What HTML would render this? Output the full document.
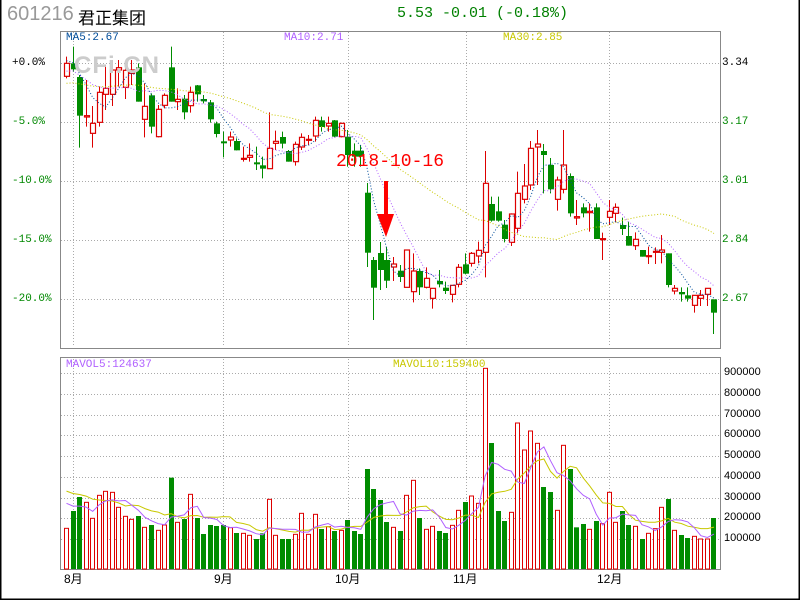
<!DOCTYPE html>
<html><head><meta charset="utf-8"><style>
html,body{margin:0;padding:0;background:#fff;}
body{width:800px;height:600px;overflow:hidden;position:relative;font-family:"Liberation Sans","Noto Sans CJK SC",sans-serif;}
.t{position:absolute;white-space:nowrap;}
.m{font-family:"Liberation Mono","DejaVu Sans Mono",monospace;}
</style></head><body>
<svg id="s" width="800" height="600" style="position:absolute;left:0;top:0"></svg>
<div class="t" style="left:7px;top:3px;font-size:20px;color:#999;">601216</div>
<div class="t" style="left:78px;top:4px;font-size:17px;color:#000;font-family:'Noto Sans CJK SC',sans-serif;">君正集团</div>
<div class="t m" style="left:397px;top:5px;font-size:15px;color:#008000;">5.53 -0.01 (-0.18%)</div>
<div class="t m" style="left:66px;top:32px;font-size:11px;color:#004c99;">MA5:2.67</div>
<div class="t m" style="left:284px;top:32px;font-size:11px;color:#b060ff;">MA10:2.71</div>
<div class="t m" style="left:503px;top:32px;font-size:11px;color:#c8c800;">MA30:2.85</div>
<div class="t m" style="left:66px;top:359px;font-size:11px;color:#b060ff;">MAVOL5:124637</div>
<div class="t m" style="left:393px;top:359px;font-size:11px;color:#c8c800;">MAVOL10:159400</div>
<div class="t" style="left:74px;top:52px;font-size:24px;font-weight:bold;color:#ccc;letter-spacing:1px;">CFi.CN</div>
<div class="t m" style="left:336px;top:152px;font-size:18px;color:#f00;">2018-10-16</div>
<div class="t m" style="left:12px;top:57px;font-size:11px;color:#000;">+0.0%</div>
<div class="t m" style="left:12px;top:116px;font-size:11px;color:#080;">-5.0%</div>
<div class="t m" style="left:12px;top:175px;font-size:11px;color:#080;">-10.0%</div>
<div class="t m" style="left:12px;top:234px;font-size:11px;color:#080;">-15.0%</div>
<div class="t m" style="left:12px;top:293px;font-size:11px;color:#080;">-20.0%</div>
<div class="t m" style="left:722px;top:57px;font-size:11px;color:#000;">3.34</div>
<div class="t m" style="left:722px;top:116px;font-size:11px;color:#080;">3.17</div>
<div class="t m" style="left:722px;top:175px;font-size:11px;color:#080;">3.01</div>
<div class="t m" style="left:722px;top:234px;font-size:11px;color:#080;">2.84</div>
<div class="t m" style="left:722px;top:293px;font-size:11px;color:#080;">2.67</div>
<div id="vl"></div>
<div class="t" style="left:64px;top:570px;font-size:12px;">8月</div>
<div class="t" style="left:214px;top:570px;font-size:12px;">9月</div>
<div class="t" style="left:335px;top:570px;font-size:12px;">10月</div>
<div class="t" style="left:453px;top:570px;font-size:12px;">11月</div>
<div class="t" style="left:597px;top:570px;font-size:12px;">12月</div>
<script>
var vl=document.getElementById('vl'),h='';
for(var k=9;k>=1;k--){var y=373.3+(9-k)*20.7;h+='<div class="t" style="left:724px;top:'+(y-7)+'px;font-size:11px;color:#000;">'+k+'00000</div>';}
vl.innerHTML=h;
// candles: [color, bodyTop, bodyBot, wickTop, wickBot] ; seg A zoom/3
var A=[['R',190,229,170,235],['G',190,208,140,215],['G',231,347,225,443],['R',347,351,240,380],['R',370,400,318,443],['R',277,367,260,380],['R',265,283,195,330],['R',210,283,180,318],['R',203,210,180,260],['R',211,262,200,297],['R',210,220,180,255],['G',202,305,190,305],['R',319,358,250,412],['G',286,380,280,400],['R',328,410,315,412],['R',286,316,280,325],['G',202,305,140,305],['R',298,305,265,330],['G',296,337,285,358],['R',277,317,260,338],['G',256,283,255,305],['G',297,304,285,310],['G',307,358,300,368],['G',370,402,365,412],['G',424,430,395,472],['R',411,420,395,440],['G',423,451,415,451],['R',475,478,440,485],['R',466,472,430,485],['G',487,493,440,510],['G',496,506,470,535],['R',445,506,337,506],['R',424,430,392,450],['G',411,431,395,445],['G',453,485,450,485],['R',433,485,425,497],['R',412,441,400,450],['R',418,420,405,435],['R',361,408,350,425],['G',361,381,350,395],['R',370,378,350,395],['G',361,410,360,412],['R',370,410,368,412],['G',410,465,390,500],['G',452,470,430,500],['G',452,470,435,500]];
var B=[['G',192.7,252.7,183,267],['G',260,287.7,257,320],['G',253,270,242,290],['G',260,280.7,247,288],['R',264,267,257,281],['G',270.7,277,265,282]];
var C=[['R',240,352,240,352],['R',303,365,250,397],['G',303,352,295,375],['R',325,352,292,355],['R',355,385,355,416],['G',333,343,300,352],['G',353,363,335,372],['R',346,373,345,397],['R',292,343,282,352],['G',283,311,250,313],['R',250,280,246,290],['R',241,258,215,280],['R',40,247,-57,322],['G',102,152,80,155],['G',124,152,80,155],['G',164,207,150,217],['R',132,217,130,228],['R',70,175,5,190],['R',48,88,-18,100],['R',-65,45,-87,60],['R',-78,-69,-120,45],['G',-57,-45,-78,70],['G',-15,58,-36,70],['R',30,88,20,122],['R',-15,58,-120,70],['G',18,130,10,140],['R',140,144,90,165],['G',112,130,100,142],['R',124,128,100,185],['G',112,207,100,207],['R',206,208,188,270],['R',124,142,90,165],['R',112,130,100,157],['G',165,177,143,195],['G',198,227,155,227],['R',208,227,187,240],['G',240,260,240,260],['R',257,259,230,282],['R',244,246,232,282],['R',240,247,195,280],['G',250,345,250,352],['R',355,363,345,373],['G',366,373,352,395],['G',376,386,352,395],['R',376,406,375,428],['R',376,385,360,408],['R',355,373,355,408],['G',388,428,388,492]];
var c=[];
A.forEach(function(a){c.push([a[0],a[1]/3,a[2]/3,a[3]/3,a[4]/3]);});
B.forEach(function(a){c.push(a);});
C.forEach(function(a){c.push([a[0],170+a[1]/3,170+a[2]/3,170+a[3]/3,170+a[4]/3]);});
var V=[['R',535],['G',483],['G',441],['R',457],['R',505],['R',436],['R',424],['R',427],['R',472],['R',499],['R',508],['G',498],['R',532],['G',525],['R',541],['R',525],['G',383],['R',517],['G',507],['R',433],['G',504],['G',552],['G',525],['G',528],['G',525],['R',533],['G',549],['R',550],['R',556],['G',567],['G',550],['R',448],['R',556],['G',567],['G',567],['R',553],['R',490],['R',553],['R',493],['G',537],['R',530],['G',543],['R',541],['G',510],['G',543],['G',552],['G',357],['G',417],['G',450],['G',516],['R',532],['G',543]];
var V2=[['R',436],['R',391],['G',504],['R',538],['R',529],['G',543],['G',549],['R',526],['R',481],['G',456],['R',438],['R',460],['R',55],['G',279],['G',483],['G',513],['R',487],['R',219],['R',300],['R',243],['R',280],['G',411],['G',426],['R',481],['R',286],['G',357],['G',532],['G',522],['R',538],['G',513],['R',521],['R',427],['R',517],['G',483],['G',525],['R',529],['G',567],['R',550],['R',536],['R',472],['G',447],['R',541],['G',555],['G',564],['R',559],['R',567],['R',567],['G',504]];
var vol=V.concat(V2).map(function(v){return [v[0],350+v[1]/3];});
var s='';
var GR='#aaa';
// grids
[63,122,181,240,299].forEach(function(y){s+='<line x1="61" x2="719" y1="'+(y+.5)+'" y2="'+(y+.5)+'" stroke="'+GR+'" stroke-dasharray="1,2"/>';});
[73,223,348,466,609].forEach(function(x){s+='<line x1="'+(x+.5)+'" x2="'+(x+.5)+'" y1="32" y2="347" stroke="'+GR+'" stroke-dasharray="1,2"/><line x1="'+(x+.5)+'" x2="'+(x+.5)+'" y1="359" y2="568" stroke="'+GR+'" stroke-dasharray="1,2"/>';});
for(var k=0;k<9;k++){var y=Math.round(373.3+k*20.7)+.5;s+='<line x1="61" x2="719" y1="'+y+'" y2="'+y+'" stroke="'+GR+'" stroke-dasharray="1,2"/>';}
s+='<rect x="60.5" y="31.5" width="660" height="317" fill="none" stroke="#888"/>';
s+='<rect x="60.5" y="357.5" width="660" height="212" fill="none" stroke="#888"/>';
s+='<path d="M0.5 0V599.5H799.5V0" fill="none" stroke="#000" stroke-width="2"/>';
function X(i){return 64+6.54*i;}
// volume bars
vol.forEach(function(v,i){var x=Math.round(X(i));if(v[0]=='G')s+='<rect x="'+x+'" y="'+v[1]+'" width="5" height="'+(569-v[1])+'" fill="#008c00"/>';else s+='<rect x="'+(x+.5)+'" y="'+v[1]+'" width="4" height="'+(569-v[1])+'" fill="#fff" stroke="#d00" stroke-width="1"/>';});
// candles
c.forEach(function(d,i){var x=Math.round(X(i)),col=d[0]=='G'?'#008c00':'#d00';
s+='<line x1="'+(x+2.5)+'" x2="'+(x+2.5)+'" y1="'+d[3]+'" y2="'+d[4]+'" stroke="'+col+'"/>';
var hgt=Math.max(d[2]-d[1],1);
if(d[0]=='G')s+='<rect x="'+x+'" y="'+d[1]+'" width="6" height="'+hgt+'" fill="#008c00"/>';
else s+='<rect x="'+(x+.5)+'" y="'+d[1]+'" width="5" height="'+hgt+'" fill="#fff" stroke="#d00" stroke-width="1.2"/>';});
function ma(arr,n,first){var out=[];for(var i=0;i<arr.length;i++){var a=0,m=0;for(var j=Math.max(0,i-n+1);j<=i;j++){a+=arr[j];m++;}if(first!==undefined){a+=first*(n-m);m=n;}out.push(a/m);}return out;}
function pl(arr,col,dash,st){var p=arr.map(function(y,i){return (X(i)+2.5).toFixed(1)+','+y.toFixed(1);}).join(' ');return '<polyline points="'+p+'" fill="none" stroke="'+col+'" stroke-width="1"'+(dash?' stroke-dasharray="1,2"':'')+'/>';}
var cl=c.map(function(d){return d[0]=='R'?d[1]:d[2];});
s+=pl(ma(cl,30,84),'#c8c800',1);
s+=pl(ma(cl,10,72),'#b060ff',1);
s+=pl(ma(cl,5,60),'#004c99',1);
var vv=vol.map(function(v){return v[1];});
s+=pl(ma(vv,10,487),'#c8c800',0);
s+=pl(ma(vv,5,497),'#b060ff',0);
// arrow
s+='<rect x="384" y="181" width="4" height="37" fill="#f00"/><polygon points="377,214 394,214 386,237" fill="#f00"/>';
document.getElementById('s').innerHTML=s;
</script>
</body></html>
